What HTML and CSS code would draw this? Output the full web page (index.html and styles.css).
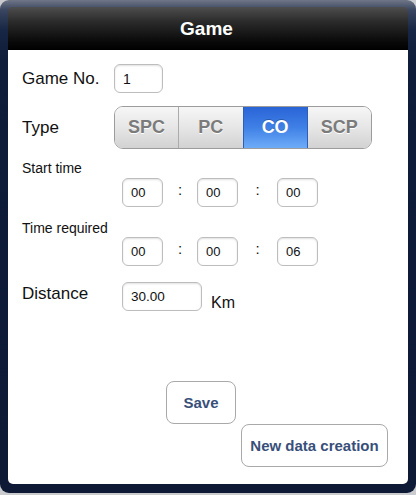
FILE: index.html
```html
<!DOCTYPE html>
<html>
<head>
<meta charset="utf-8">
<link rel="stylesheet" href="styles.css">
</head>
<body>
<div class="popover">
  <div class="header"><span class="title">Game</span></div>
  <div class="content">
    <div class="row row-game">
      <span class="label label-big w92">Game No.</span>
      <span class="field f-game">1</span>
    </div>
    <div class="row row-type">
      <span class="label label-big w92">Type</span>
      <div class="segmented">
        <span class="seg">SPC</span>
        <span class="seg">PC</span>
        <span class="seg seg-on">CO</span>
        <span class="seg">SCP</span>
      </div>
    </div>
    <div class="label label-small sub sub-start">Start time</div>
    <div class="time-row tr-start">
      <span class="field f-time">00</span>
      <span class="colon c1">:</span>
      <span class="field f-time">00</span>
      <span class="colon c2">:</span>
      <span class="field f-time">00</span>
    </div>
    <div class="label label-small sub sub-req">Time required</div>
    <div class="time-row tr-req">
      <span class="field f-time">00</span>
      <span class="colon c1">:</span>
      <span class="field f-time">00</span>
      <span class="colon c2">:</span>
      <span class="field f-time">06</span>
    </div>
    <div class="row row-dist">
      <span class="label label-big w100 dist-label">Distance</span>
      <span class="field f-dist">30.00</span>
      <span class="unit">Km</span>
    </div>
    <div class="btn btn-save">Save</div>
    <div class="btn btn-new">New data creation</div>
  </div>
</div>
</body>
</html>
```
FILE: styles.css
```css
html, body {
  margin: 0;
  padding: 0;
  background: #c9cbcf;
}
body {
  width: 416px;
  height: 495px;
  font-family: "Liberation Sans", Arial, sans-serif;
}
.popover {
  width: 416px;
  height: 493px;
  box-sizing: border-box;
  padding: 7px 8px 9px 8px;
  border-radius: 9px;
  background: linear-gradient(#6f7686 0px, #3a4660 10px, #172644 30px, #0f1c3a 60px, #0d1935 100%);
  display: flex;
  flex-direction: column;
}
.header {
  height: 43px;
  border-radius: 5px 5px 0 0;
  background: linear-gradient(#4e4e4e 0%, #2a2a2a 35%, #0a0a0a 80%, #000 100%);
  display: flex;
  align-items: center;
  justify-content: center;
  flex-shrink: 0;
}
.title {
  color: #fff;
  font-weight: bold;
  font-size: 19px;
  margin-left: -3px;
}
.content {
  flex: 1;
  background: #fff;
  border-radius: 0 0 5px 5px;
  padding-left: 14px;
  display: flex;
  flex-direction: column;
  align-items: flex-start;
}
.row {
  display: flex;
  align-items: center;
}
.label {
  color: #111;
}
.label-big {
  font-size: 17px;
}
.label-small {
  font-size: 14px;
  line-height: 16px;
}
.w92 { width: 92px; flex-shrink: 0; }
.w100 { width: 100px; flex-shrink: 0; }

.field {
  box-sizing: border-box;
  height: 29px;
  border: 1px solid #bdbdbd;
  border-radius: 6px;
  box-shadow: inset 0 1px 2px rgba(0,0,0,0.12);
  background: #fff;
  font-size: 13px;
  color: #111;
  display: flex;
  align-items: center;
  padding-left: 8px;
}
.row-game { margin-top: 14px; }
.f-game { width: 49px; font-size: 14px; }

.row-type { margin-top: 13px; }
.segmented {
  display: flex;
  height: 43px;
  width: 258px;
  box-sizing: border-box;
  border: 1px solid #9c9c9c;
  border-radius: 9px;
  overflow: hidden;
}
.seg {
  flex: 1;
  display: flex;
  align-items: center;
  justify-content: center;
  font-weight: bold;
  font-size: 18px;
  color: #7b7b7b;
  text-shadow: 0 1px 0 #fff;
  background: linear-gradient(#f6f6f6 0%, #e6e6e6 50%, #d2d2d2 100%);
  border-left: 1px solid #ababab;
}
.seg:first-child { border-left: none; }
.seg-on {
  color: #fff;
  text-shadow: 0 -1px 0 rgba(0,0,0,0.25);
  background: linear-gradient(#2a64d6 0%, #3f80e6 50%, #6eacf7 100%);
  border-left-color: #2b5fb8;
}
.seg-on + .seg { border-left-color: #2b5fb8; }

.sub-start { margin-top: 11px; }
.sub-req { margin-top: 13px; }
.time-row {
  display: flex;
  align-items: center;
  margin-left: 100px;
}
.tr-start { margin-top: 2px; }
.tr-req { margin-top: 1px; }
.f-time { width: 41px; }
.colon {
  font-size: 15px;
  color: #111;
  text-align: center;
  margin-top: -6px;
}
.c1 { width: 34px; }
.c2 { width: 39px; }

.row-dist {
  margin-top: 16px;
  align-items: flex-start;
}
.dist-label { margin-top: 2px; }
.f-dist { width: 80px; font-size: 13.5px; }
.unit {
  font-size: 16px;
  color: #111;
  margin-left: 9px;
  margin-top: 12px;
}

.btn {
  box-sizing: border-box;
  height: 43px;
  border: 1px solid #a9a9a9;
  border-radius: 8px;
  background: #fff;
  color: #384f7a;
  font-weight: bold;
  font-size: 15px;
  display: flex;
  align-items: center;
  justify-content: center;
}
.btn-save {
  margin-top: 69px;
  margin-left: 144px;
  width: 70px;
}
.btn-new {
  margin-left: 219px;
  width: 147px;
}
```
